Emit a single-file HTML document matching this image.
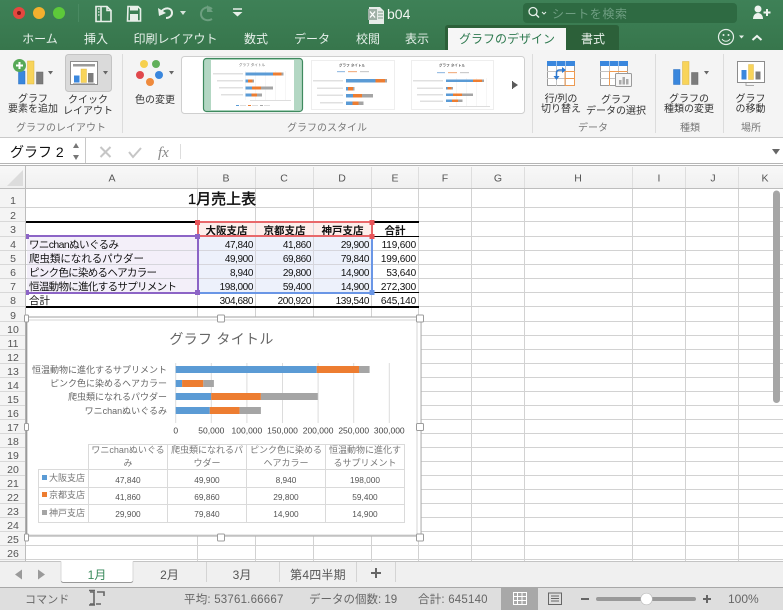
<!DOCTYPE html>
<html lang="ja"><head><meta charset="utf-8"><title>b04</title>
<style>
html,body{margin:0;padding:0;background:#fff;width:783px;height:610px;overflow:hidden}
svg{display:block;position:absolute;left:0;top:0}
text{font-family:"Liberation Sans","Noto Sans CJK JP",sans-serif}
.tab{font-size:12px;fill:#e6f0ea;text-anchor:middle}
.rb{font-size:10px;fill:#333;text-anchor:middle}
.gl{font-size:10px;fill:#777;text-anchor:middle}
.hd{font-size:10.5px;fill:#555;text-anchor:middle}
.c{font-size:10.5px;fill:#111}
.h{font-size:10.5px;fill:#111;text-anchor:middle;font-weight:700}
.n{font-size:10px;fill:#111;text-anchor:end;letter-spacing:-.4px}
.e{letter-spacing:-.15px}
.cl{font-size:9px;fill:#666;text-anchor:end}
.ax{font-size:8.5px;fill:#444;text-anchor:middle}
.th{font-size:9px;fill:#777;text-anchor:middle}
.dv{font-size:8.3px;fill:#555;text-anchor:middle}
.lg{font-size:9px;fill:#777}
.st{font-size:11px;fill:#666}
.sh{font-size:12px;fill:#555;text-anchor:middle}
.ti{font-size:3.6px;fill:#666;text-anchor:middle}
</style></head><body>
<svg width="783" height="610" viewBox="0 0 783 610" xmlns="http://www.w3.org/2000/svg">
<defs>
<linearGradient id="g1" x1="0" y1="0" x2="0" y2="1"><stop offset="0" stop-color="#3e8157"/><stop offset="1" stop-color="#37764c"/></linearGradient>
<linearGradient id="hdr" x1="0" y1="0" x2="0" y2="1"><stop offset="0" stop-color="#f8f8f8"/><stop offset="1" stop-color="#f0f0f0"/></linearGradient>
</defs>

<!-- title bar -->
<rect width="783" height="50" fill="url(#g1)"/>
<circle cx="19" cy="13" r="6" fill="#e5473f"/><circle cx="19" cy="13" r="2" fill="#7a1a18"/>
<circle cx="39" cy="13" r="6" fill="#f3b02e"/>
<circle cx="59" cy="13" r="6" fill="#5dc93a"/>
<path d="M78.500 4v18" stroke="#4a8a62" stroke-width="1"/>
<!-- qat icons -->
<path d="M96 6.500h11l4 4v11h-15zM101 6.500v15M107 6.500v4h4" fill="none" stroke="#e8efe9" stroke-width="1.600"/>
<path d="M98 9h1.500M98 12h1.500M98 15h1.500" stroke="#e8efe9" stroke-width="1.200"/>
<path d="M128 6.500h10l2.500 2.500v12h-13z" fill="none" stroke="#e8efe9" stroke-width="1.600"/>
<rect x="130" y="6" width="8" height="4.500" fill="#e8efe9"/><rect x="130" y="14" width="8" height="7" fill="#e8efe9"/>
<path d="M161 12c3-5 11-5 11 1 0 3-3 5-6 5" fill="none" stroke="#e8efe9" stroke-width="2"/>
<path d="M158 8l1 8 7-3z" fill="#e8efe9"/>
<path d="M180 11h6l-3 4z" fill="#d5e3da"/>
<path d="M212 9c-5-4-11 0-11 5s6 8 11 5" fill="none" stroke="#6d9f80" stroke-width="2"/>
<path d="M207 5v7h6z" fill="#6d9f80"/>
<path d="M233 9h9" stroke="#e8efe9" stroke-width="1.500"/><path d="M232.500 12h10l-5 4.500z" fill="#e8efe9"/>
<!-- document -->
<path d="M369 7h11l4 4v13h-15z" fill="#e6ece8"/>
<rect x="368" y="9" width="9" height="11" fill="#9fb0a6"/>
<path d="M370 11.500l5 6M375 11.500l-5 6" stroke="#fff" stroke-width="1.300"/>
<path d="M378 12h5M378 15h5M378 18h5" stroke="#7e9c8a" stroke-width="1"/>
<text x="387" y="19" font-size="14" fill="#f0f5f1">b04</text>
<!-- search -->
<rect x="523" y="3" width="214" height="20" rx="4" fill="#2e6a42"/>
<circle cx="533" cy="11.500" r="4" fill="none" stroke="#e6efe9" stroke-width="1.300"/><path d="M536 14.500l3 3" stroke="#e6efe9" stroke-width="1.500"/>
<path d="M542 12l2 2 2-2" fill="none" stroke="#e6efe9" stroke-width="1"/>
<text x="552" y="18" font-size="12" fill="#6f9e82" letter-spacing=".6">シートを検索</text>
<circle cx="758" cy="9" r="3.500" fill="#eef3ef"/><path d="M753 19c0-8 10-8 10 0z" fill="#eef3ef"/>
<path d="M767 9v7M763.500 12.500h7" stroke="#eef3ef" stroke-width="2"/>
<!-- tabs -->
<text class="tab" x="40" y="43">ホーム</text>
<text class="tab" x="96" y="43">挿入</text>
<text class="tab" x="175.500" y="43">印刷レイアウト</text>
<text class="tab" x="256" y="43">数式</text>
<text class="tab" x="312" y="43">データ</text>
<text class="tab" x="368" y="43">校閲</text>
<text class="tab" x="417" y="43">表示</text>
<path d="M445 50V28q0-3 3-3h168q3 0 3 3v22z" fill="#2c6039"/>
<rect x="448" y="28" width="118" height="22" fill="#f6f6f6"/>
<text class="tab" x="507" y="43" style="fill:#2f7a50">グラフのデザイン</text>
<text class="tab" x="593" y="43" style="fill:#eaf2ec">書式</text>
<circle cx="726" cy="37" r="7.500" fill="none" stroke="#e6efe9" stroke-width="1.200"/>
<circle cx="723.500" cy="35" r="1" fill="#e6efe9"/><circle cx="728.500" cy="35" r="1" fill="#e6efe9"/>
<path d="M722 39c2 3 6 3 8 0" fill="none" stroke="#e6efe9" stroke-width="1"/>
<path d="M739 35.500h5l-2.500 3z" fill="#e6efe9"/>
<path d="M752.500 40l4.500-4 4.500 4" fill="none" stroke="#eef3ef" stroke-width="2"/>

<!-- ribbon -->
<rect y="50" width="783" height="87" fill="#f4f4f4"/>
<path d="M0 137.500h783" stroke="#c9c9c9"/>
<!-- add element -->
<rect x="18.500" y="71" width="6.500" height="13" fill="#3a87dd" stroke="#2a6fc0" stroke-width=".5"/>
<rect x="27.500" y="61" width="6.500" height="23" fill="#f8d45a" stroke="#d9b23e" stroke-width=".5"/>
<rect x="36.500" y="72" width="6.500" height="12" fill="#7c7c7c" stroke="#666" stroke-width=".5"/>
<circle cx="19.500" cy="65.500" r="6.500" fill="#57a957"/>
<path d="M19.500 62v7M16 65.500h7" stroke="#fff" stroke-width="2"/>
<path d="M48 71h5l-2.500 3.500z" fill="#666"/>
<text class="rb" x="33" y="102">グラフ</text>
<text class="rb" x="33" y="112">要素を追加</text>
<!-- quick layout -->
<rect x="65.500" y="54.500" width="46" height="37" rx="3" fill="#dadada" stroke="#c4c4c4"/>
<rect x="70.500" y="61.500" width="27" height="23" fill="#fff" stroke="#8c8c8c"/>
<rect x="73" y="64" width="22" height="2.500" fill="#9a9a9a"/>
<rect x="74" y="75.500" width="5.500" height="7" fill="#3a87dd"/>
<rect x="81" y="69" width="5.500" height="13.500" fill="#f8d45a" stroke="#d9b23e" stroke-width=".4"/>
<rect x="88" y="73" width="5.500" height="9.500" fill="#7c7c7c"/>
<path d="M73 83.500h22" stroke="#bbb"/>
<path d="M103 71h5l-2.500 3.500z" fill="#666"/>
<text class="rb" x="88" y="103">クイック</text>
<text class="rb" x="88" y="114">レイアウト</text>
<text class="gl" x="61" y="131">グラフのレイアウト</text>
<path d="M122.500 54v79M532.500 54v79M655.500 54v79M723.500 54v79" stroke="#dcdcdc"/>
<!-- colour -->
<circle cx="144" cy="64" r="4" fill="#f6d04d"/><circle cx="156" cy="64" r="4" fill="#62b05a"/>
<circle cx="140" cy="75" r="4" fill="#e0484c"/><circle cx="159" cy="75" r="4" fill="#3a87dd"/>
<circle cx="150" cy="82" r="4" fill="#ef8a3c"/>
<path d="M169 71h5l-2.500 3.500z" fill="#666"/>
<text class="rb" x="155" y="103">色の変更</text>
<!-- gallery -->
<rect x="181.500" y="56.500" width="343" height="57" rx="3" fill="#fff" stroke="#cfcfcf"/>
<rect x="203.500" y="58.500" width="99" height="53" rx="3" fill="#b3d7c3" stroke="#3f8a5f" stroke-width="1.200"/>
<rect x="211" y="60" width="83" height="50" fill="#fff"/>
<text class="ti" x="252" y="66">グラフ タイトル</text>
<rect x="213" y="73" width="30" height="1.500" fill="#e0e0e0"/><rect x="217" y="80" width="26" height="1.500" fill="#e0e0e0"/><rect x="219" y="87" width="24" height="1.500" fill="#e0e0e0"/><rect x="221" y="94" width="22" height="1.500" fill="#e0e0e0"/>
<path d="M245.500 71v29M255.500 71v29M265.500 71v29M275.500 71v29M285.500 71v29" stroke="#f0f0f0" stroke-width=".6"/>
<rect x="245.500" y="72.500" width="27.500" height="3" fill="#5b9bd5"/><rect x="273" y="72.500" width="8.500" height="3" fill="#ed7d31"/><rect x="281.500" y="72.500" width="2" height="3" fill="#a5a5a5"/>
<rect x="245.500" y="79.500" width="2.500" height="3" fill="#5b9bd5"/><rect x="248" y="79.500" width="4.500" height="3" fill="#ed7d31"/><rect x="252.500" y="79.500" width="1.500" height="3" fill="#a5a5a5"/>
<rect x="245.500" y="86.500" width="6.500" height="3" fill="#5b9bd5"/><rect x="252" y="86.500" width="9" height="3" fill="#ed7d31"/><rect x="261" y="86.500" width="12" height="3" fill="#a5a5a5"/>
<rect x="245.500" y="93.500" width="6" height="3" fill="#5b9bd5"/><rect x="251.500" y="93.500" width="5.500" height="3" fill="#ed7d31"/><rect x="257" y="93.500" width="5" height="3" fill="#a5a5a5"/>
<rect x="250" y="100" width="41" height="1" fill="#ddd"/>
<rect x="236" y="105" width="3" height="1" fill="#5b9bd5"/><rect x="248" y="105" width="3" height="1" fill="#ed7d31"/><rect x="260" y="105" width="3" height="1" fill="#a5a5a5"/>
<rect x="240" y="105" width="6" height="1" fill="#ddd"/><rect x="252" y="105" width="6" height="1" fill="#ddd"/><rect x="264" y="105" width="6" height="1" fill="#ddd"/>

<rect x="311.500" y="60.500" width="83" height="49" fill="#fff" stroke="#eee"/>
<text class="ti" x="352" y="66.500" font-weight="700">グラフ タイトル</text>
<rect x="337" y="71" width="8" height="1.200" fill="#9cc0e4"/><rect x="348" y="71" width="9" height="1.200" fill="#f2b48a"/><rect x="360" y="71" width="9" height="1.200" fill="#ccc"/>
<rect x="313" y="80" width="30" height="1.500" fill="#e0e0e0"/><rect x="317" y="87.500" width="26" height="1.500" fill="#e0e0e0"/><rect x="317" y="94.500" width="26" height="1.500" fill="#e0e0e0"/><rect x="320" y="102" width="23" height="1.500" fill="#e0e0e0"/>
<rect x="346" y="79" width="29.500" height="3.500" fill="#5b9bd5"/><rect x="375.500" y="79" width="9.500" height="3.500" fill="#ed7d31"/><rect x="385" y="79" width="2" height="3.500" fill="#a5a5a5"/>
<rect x="346" y="87" width="2" height="3.500" fill="#5b9bd5"/><rect x="348" y="87" width="5" height="3.500" fill="#ed7d31"/><rect x="353" y="87" width="1.500" height="3.500" fill="#a5a5a5"/>
<rect x="346" y="94" width="7" height="3.500" fill="#5b9bd5"/><rect x="353" y="94" width="9" height="3.500" fill="#ed7d31"/><rect x="362" y="94" width="11" height="3.500" fill="#a5a5a5"/>
<rect x="346" y="101.500" width="6.500" height="3.500" fill="#5b9bd5"/><rect x="352.500" y="101.500" width="6" height="3.500" fill="#ed7d31"/><rect x="358.500" y="101.500" width="5" height="3.500" fill="#a5a5a5"/>

<rect x="411.500" y="60.500" width="82" height="49" fill="#fff" stroke="#eee"/>
<text class="ti" x="452" y="66.500" font-weight="700">グラフ タイトル</text>
<rect x="437" y="72" width="8" height="1.200" fill="#9cc0e4"/><rect x="448" y="72" width="9" height="1.200" fill="#f2b48a"/><rect x="460" y="72" width="9" height="1.200" fill="#ccc"/>
<rect x="413" y="80" width="30" height="1.500" fill="#e0e0e0"/><rect x="417" y="87.500" width="26" height="1.500" fill="#e0e0e0"/><rect x="417" y="94" width="26" height="1.500" fill="#e0e0e0"/><rect x="420" y="100.500" width="23" height="1.500" fill="#e0e0e0"/>
<path d="M456.500 78v28M466.500 78v28M476.500 78v28M486.500 78v28" stroke="#f0f0f0" stroke-width=".6"/>
<rect x="446" y="79.500" width="27" height="2.500" fill="#5b9bd5"/><rect x="473" y="79.500" width="9" height="2.500" fill="#ed7d31"/><rect x="482" y="79.500" width="2" height="2.500" fill="#a5a5a5"/>
<rect x="446" y="87" width="1.500" height="2.500" fill="#5b9bd5"/><rect x="447.500" y="87" width="4" height="2.500" fill="#ed7d31"/><rect x="451.500" y="87" width="1.500" height="2.500" fill="#a5a5a5"/>
<rect x="446" y="93.500" width="7" height="2.500" fill="#5b9bd5"/><rect x="453" y="93.500" width="9" height="2.500" fill="#ed7d31"/><rect x="462" y="93.500" width="11" height="2.500" fill="#a5a5a5"/>
<rect x="446" y="99.500" width="6" height="2.500" fill="#5b9bd5"/><rect x="452" y="99.500" width="6" height="2.500" fill="#ed7d31"/><rect x="458" y="99.500" width="4.500" height="2.500" fill="#a5a5a5"/>
<rect x="449" y="106" width="41" height="1" fill="#ddd"/>
<path d="M512 81l6 4-6 4z" fill="#5a5a5a"/>
<rect x="512" y="81" width="1" height="8" fill="#5a5a5a"/>
<text class="gl" x="327" y="131">グラフのスタイル</text>

<!-- data icons -->
<rect x="547.500" y="61.500" width="27" height="24" fill="#fff" stroke="#9a9a9a"/>
<path d="M547 71.500h28M547 78.500h28M556.500 66v20M565.500 66v20" stroke="#c4c4c4"/>
<rect x="547" y="61" width="28" height="5" fill="#3a87dd"/>
<path d="M565.500 61v5M556.500 61v5" stroke="#9cc3ee"/>
<path d="M565 71.500h9.500M565 78.500h9.500M565 71v14.500M574.500 71v14.500M565 85.500h9.500" fill="none" stroke="#ef9a50"/>
<path d="M556.500 77v-4q0-3 3-3h3" fill="none" stroke="#2d78cf" stroke-width="1.500"/>
<path d="M562 67v6l4-3zM553.500 76h6l-3 4z" fill="#2d78cf"/>
<text class="rb" x="561" y="102">行/列の</text>
<text class="rb" x="561" y="112">切り替え</text>
<rect x="600.500" y="61.500" width="27" height="24" fill="#fff" stroke="#9a9a9a"/>
<path d="M600 71.500h28M600 78.500h28M609.500 66v20M618.500 66v20" stroke="#c4c4c4"/>
<rect x="600" y="61" width="28" height="5" fill="#3a87dd"/>
<path d="M609.500 61v5M618.500 61v5" stroke="#9cc3ee"/>
<path d="M609.500 71.500h18M609.500 71.500v14" fill="none" stroke="#ef9a50"/>
<rect x="615.500" y="73.500" width="16" height="13" rx="1" fill="#f6f6f6" stroke="#9a9a9a"/>
<rect x="619" y="80" width="2.500" height="4.500" fill="#aaa"/><rect x="622.500" y="77" width="2.500" height="7.500" fill="#aaa"/><rect x="626" y="79" width="2.500" height="5.500" fill="#aaa"/>
<text class="rb" x="616" y="103">グラフ</text>
<text class="rb" x="616" y="114">データの選択</text>
<text class="gl" x="593" y="131">データ</text>
<!-- change type -->
<rect x="673.500" y="69.500" width="6.500" height="15" fill="#3a87dd" stroke="#2a6fc0" stroke-width=".5"/>
<rect x="682.500" y="61.500" width="6.500" height="23" fill="#f8d45a" stroke="#d9b23e" stroke-width=".5"/>
<rect x="691.500" y="72.500" width="6.500" height="12" fill="#7c7c7c" stroke="#666" stroke-width=".5"/>
<path d="M704 71h5l-2.500 3.500z" fill="#666"/>
<text class="rb" x="689" y="102">グラフの</text>
<text class="rb" x="689" y="112">種類の変更</text>
<text class="gl" x="690" y="131">種類</text>
<!-- move -->
<rect x="737.500" y="61.500" width="27" height="21" fill="#fff" stroke="#8c8c8c"/>
<rect x="741.500" y="70" width="5" height="9.500" fill="#3a87dd"/>
<rect x="748.500" y="64.500" width="5" height="15" fill="#f8d45a" stroke="#d9b23e" stroke-width=".4"/>
<rect x="755.500" y="71.500" width="5" height="8" fill="#7c7c7c"/>
<path d="M746 83v2.500h8" fill="none" stroke="#aaa"/>
<text class="rb" x="750.500" y="102">グラフ</text>
<text class="rb" x="750.500" y="112">の移動</text>
<text class="gl" x="751" y="131">場所</text>

<!-- formula bar -->
<rect y="138" width="783" height="26" fill="#fff"/>
<text x="10" y="157" font-size="14" fill="#111">グラフ 2</text>
<path d="M73 148l3-5 3 5z" fill="#777"/><path d="M73 155l3 5 3-5z" fill="#777"/>
<path d="M85.500 138v25" stroke="#c8c8c8"/>
<path d="M100.500 147l10 10M110.500 147l-10 10" stroke="#c6c6c6" stroke-width="2"/>
<path d="M129 152l4 5 8-9" fill="none" stroke="#c6c6c6" stroke-width="2"/>
<text x="158" y="157" font-size="15" font-style="italic" fill="#888" style="font-family:'Liberation Serif',serif">fx</text>
<path d="M180.500 144v15" stroke="#ddd"/>
<path d="M772 149h8l-4 5.500z" fill="#666"/>
<path d="M0 163.500h783" stroke="#b5b5b5"/><path d="M0 165.500h783" stroke="#b5b5b5"/>

<!-- grid -->
<rect y="166" width="783" height="395" fill="#fff"/>
<rect y="166" width="783" height="22" fill="url(#hdr)"/>
<rect y="188" width="25.500" height="373" fill="#f4f4f4"/>
<path d="M23 170v16H7z" fill="#dcdcdc"/>
<path d="M26 207.500h757M26 221.500h757M26 236.500h757M26 250.500h757M26 264.500h757M26 278.500h757M26 292.500h757M26 306.500h757M26 321.500h757M26 335.500h757M26 349.500h757M26 363.500h757M26 377.500h757M26 391.500h757M26 405.500h757M26 419.500h757M26 433.500h757M26 447.500h757M26 461.500h757M26 475.500h757M26 489.500h757M26 503.500h757M26 517.500h757M26 531.500h757M26 545.500h757M26 559.500h757" stroke="#d2d2d2"/>
<path d="M197.500 207v354M255.500 207v354M313.500 207v354M371.500 207v354M418.500 188v373M471.500 188v373M524.500 188v373M632.500 188v373M685.500 188v373M738.500 188v373M197.500 188v20M255.500 188v20M313.500 188v20M371.500 188v20" stroke="#d2d2d2"/>
<path d="M197.500 167v21M255.500 167v21M313.500 167v21M371.500 167v21M418.500 167v21M471.500 167v21M524.500 167v21M632.500 167v21M685.500 167v21M738.500 167v21" stroke="#dedede"/>
<path d="M0 188.500h783" stroke="#bdbdbd"/><path d="M25.500 166v395" stroke="#bdbdbd"/>
<path d="M0 207.500h25M0 221.500h25M0 236.500h25M0 250.500h25M0 264.500h25M0 278.500h25M0 292.500h25M0 306.500h25M0 321.500h25M0 335.500h25M0 349.500h25M0 363.500h25M0 377.500h25M0 391.500h25M0 405.500h25M0 419.500h25M0 433.500h25M0 447.500h25M0 461.500h25M0 475.500h25M0 489.500h25M0 503.500h25M0 517.500h25M0 531.500h25M0 545.500h25M0 559.500h25" stroke="#d8d8d8"/>
<!-- col heads -->
<text class="hd" x="112" y="181.500">A</text><text class="hd" x="226" y="181.500">B</text><text class="hd" x="284" y="181.500">C</text><text class="hd" x="342" y="181.500">D</text><text class="hd" x="395" y="181.500">E</text><text class="hd" x="445" y="181.500">F</text><text class="hd" x="498" y="181.500">G</text><text class="hd" x="578" y="181.500">H</text><text class="hd" x="659" y="181.500">I</text><text class="hd" x="713" y="181.500">J</text><text class="hd" x="765" y="181.500">K</text>
<!-- row heads -->
<text class="hd" x="13" y="204">1</text><text class="hd" x="13" y="219">2</text><text class="hd" x="13" y="233">3</text><text class="hd" x="13" y="248">4</text><text class="hd" x="13" y="262">5</text><text class="hd" x="13" y="276">6</text><text class="hd" x="13" y="290">7</text><text class="hd" x="13" y="304">8</text><text class="hd" x="13" y="319">9</text><text class="hd" x="13" y="333">10</text><text class="hd" x="13" y="347">11</text><text class="hd" x="13" y="361">12</text><text class="hd" x="13" y="375">13</text><text class="hd" x="13" y="389">14</text><text class="hd" x="13" y="403">15</text><text class="hd" x="13" y="417">16</text><text class="hd" x="13" y="431">17</text><text class="hd" x="13" y="445">18</text><text class="hd" x="13" y="459">19</text><text class="hd" x="13" y="473">20</text><text class="hd" x="13" y="487">21</text><text class="hd" x="13" y="501">22</text><text class="hd" x="13" y="515">23</text><text class="hd" x="13" y="529">24</text><text class="hd" x="13" y="543">25</text><text class="hd" x="13" y="557">26</text>

<!-- highlights -->
<rect x="27" y="237" width="170" height="55" fill="#f3eff9"/>
<rect x="198" y="223" width="173" height="13" fill="#fdeeeb"/>
<rect x="199" y="237" width="172" height="55" fill="#edf1fb"/>
<path d="M27 250.500h170M27 264.500h170M27 278.500h170M199 250.500h172M199 264.500h172M199 278.500h172M255.500 237v55M313.500 237v55M255.500 223v13M313.500 223v13" stroke="#d6d6dc"/>
<!-- table borders -->
<path d="M26 222h172M372 222h47" stroke="#000" stroke-width="2"/>
<path d="M26 307h393" stroke="#000" stroke-width="2"/>
<path d="M372 236.500h47M372 292.500h47" stroke="#000" stroke-width="1"/>
<!-- title + table -->
<text x="222" y="204" font-size="15" fill="#111" stroke="#111" stroke-width=".2" text-anchor="middle" font-weight="500">1月売上表</text>
<text class="h" x="226.500" y="234">大阪支店</text><text class="h" x="284.500" y="234">京都支店</text><text class="h" x="342.500" y="234">神戸支店</text><text class="h" x="395" y="234">合計</text>
<text class="c" x="29" y="248" textLength="90">ワニchanぬいぐるみ</text>
<text class="c" x="29" y="262" textLength="115">爬虫類になれるパウダー</text>
<text class="c" x="29" y="276" textLength="128">ピンク色に染めるヘアカラー</text>
<text class="c" x="29" y="290" textLength="148">恒温動物に進化するサプリメント</text>
<text class="c" x="29" y="304">合計</text>
<text class="n" x="253" y="248">47,840</text><text class="n" x="311" y="248">41,860</text><text class="n" x="369" y="248">29,900</text><text class="n e" x="416" y="248">119,600</text>
<text class="n" x="253" y="262">49,900</text><text class="n" x="311" y="262">69,860</text><text class="n" x="369" y="262">79,840</text><text class="n e" x="416" y="262">199,600</text>
<text class="n" x="253" y="276">8,940</text><text class="n" x="311" y="276">29,800</text><text class="n" x="369" y="276">14,900</text><text class="n e" x="416" y="276">53,640</text>
<text class="n" x="253" y="290">198,000</text><text class="n" x="311" y="290">59,400</text><text class="n" x="369" y="290">14,900</text><text class="n e" x="416" y="290">272,300</text>
<text class="n" x="253" y="304">304,680</text><text class="n" x="311" y="304">200,920</text><text class="n" x="369" y="304">139,540</text><text class="n e" x="416" y="304">645,140</text>
<!-- range selection -->
<rect x="198" y="222" width="174" height="14" fill="none" stroke="#e8686a" stroke-width="2"/>
<path d="M372 238v55H199" fill="none" stroke="#6a96e6" stroke-width="2"/>
<path d="M27 236h171v57H27" fill="none" stroke="#8c64c6" stroke-width="2"/>
<rect x="195" y="220" width="5" height="5" fill="#e8555a"/><rect x="369.500" y="220" width="5" height="5" fill="#e8555a"/><rect x="369.500" y="234" width="5" height="5" fill="#e8555a"/>
<rect x="195" y="234" width="5" height="5" fill="#8c64c6"/><rect x="195" y="290" width="5" height="5" fill="#8c64c6"/><rect x="26" y="234" width="3" height="5" fill="#8c64c6"/><rect x="26" y="290" width="3" height="5" fill="#8c64c6"/>
<rect x="369.500" y="290" width="5" height="5" fill="#6a96e6"/>

<!-- chart frame -->
<rect x="26" y="317" width="395" height="219" fill="#fff" stroke="#b0b0b0" stroke-width="1.200"/>
<rect x="27" y="320" width="390" height="215" fill="#fff" stroke="#d4d4d4"/>
<rect x="418" y="318" width="3" height="217" fill="#fff"/>
<path d="M26.500 317v219" stroke="#9a9a9a" stroke-width="1.500"/>
<path d="M421 317v219" stroke="#b0b0b0"/>
<g fill="#fff" stroke="#9c9c9c">
<rect x="217.500" y="315" width="7" height="7" rx="1"/><rect x="416.500" y="315" width="7" height="7" rx="1"/><rect x="24.500" y="315" width="4" height="7" rx="1"/>
<rect x="416.500" y="423.500" width="7" height="7" rx="1"/><rect x="24.500" y="423.500" width="4" height="7" rx="1"/>
<rect x="217.500" y="534" width="7" height="7" rx="1"/><rect x="416.500" y="534" width="7" height="7" rx="1"/><rect x="24.500" y="534" width="4" height="7" rx="1"/>
</g>
<text x="221.500" y="344" font-size="14" fill="#666" text-anchor="middle" letter-spacing=".3">グラフ タイトル</text>
<path d="M175.700 363v60M211.300 363v60M246.900 363v60M282.500 363v60M318.100 363v60M353.700 363v60M389.300 363v60" stroke="#dcdcdc"/>
<rect x="175.700" y="366" width="141" height="7" fill="#5b9bd5"/><rect x="316.700" y="366" width="42.300" height="7" fill="#ed7d31"/><rect x="359" y="366" width="10.600" height="7" fill="#a5a5a5"/>
<rect x="175.700" y="380" width="6.400" height="7" fill="#5b9bd5"/><rect x="182.100" y="380" width="21.200" height="7" fill="#ed7d31"/><rect x="203.300" y="380" width="10.600" height="7" fill="#a5a5a5"/>
<rect x="175.700" y="393" width="35.500" height="7" fill="#5b9bd5"/><rect x="211.200" y="393" width="49.700" height="7" fill="#ed7d31"/><rect x="260.900" y="393" width="56.900" height="7" fill="#a5a5a5"/>
<rect x="175.700" y="407" width="34.100" height="7" fill="#5b9bd5"/><rect x="209.800" y="407" width="29.800" height="7" fill="#ed7d31"/><rect x="239.600" y="407" width="21.300" height="7" fill="#a5a5a5"/>
<text class="cl" x="167" y="373">恒温動物に進化するサプリメント</text>
<text class="cl" x="167" y="386.500">ピンク色に染めるヘアカラー</text>
<text class="cl" x="167" y="400">爬虫類になれるパウダー</text>
<text class="cl" x="167" y="414">ワニchanぬいぐるみ</text>
<text class="ax" x="175.700" y="433.500">0</text><text class="ax" x="211.300" y="433.500">50,000</text><text class="ax" x="246.900" y="433.500">100,000</text><text class="ax" x="282.500" y="433.500">150,000</text><text class="ax" x="318.100" y="433.500">200,000</text><text class="ax" x="353.700" y="433.500">250,000</text><text class="ax" x="389.300" y="433.500">300,000</text>
<!-- data table -->
<path d="M88.500 444.500h316M38.500 469.500h366M38.500 487.500h366M38.500 504.500h366M38.500 522.500h366M38.500 469v54M88.500 444v79M167.500 444v79M246.500 444v79M325.500 444v79M404.500 444v79" stroke="#dadada" fill="none"/>
<text class="th" x="128" y="453">ワニchanぬいぐる</text><text class="th" x="128" y="466">み</text>
<text class="th" x="207" y="453">爬虫類になれるパ</text><text class="th" x="207" y="466">ウダー</text>
<text class="th" x="286" y="453">ピンク色に染める</text><text class="th" x="286" y="466">ヘアカラー</text>
<text class="th" x="365" y="453">恒温動物に進化す</text><text class="th" x="365" y="466">るサプリメント</text>
<rect x="42" y="475" width="5" height="5" fill="#5b9bd5"/><text class="lg" x="49" y="481">大阪支店</text>
<rect x="42" y="492" width="5" height="5" fill="#ed7d31"/><text class="lg" x="49" y="498">京都支店</text>
<rect x="42" y="510" width="5" height="5" fill="#a5a5a5"/><text class="lg" x="49" y="516">神戸支店</text>
<text class="dv" x="128" y="483">47,840</text><text class="dv" x="207" y="483">49,900</text><text class="dv" x="286" y="483">8,940</text><text class="dv" x="365" y="483">198,000</text>
<text class="dv" x="128" y="500">41,860</text><text class="dv" x="207" y="500">69,860</text><text class="dv" x="286" y="500">29,800</text><text class="dv" x="365" y="500">59,400</text>
<text class="dv" x="128" y="517">29,900</text><text class="dv" x="207" y="517">79,840</text><text class="dv" x="286" y="517">14,900</text><text class="dv" x="365" y="517">14,900</text>

<!-- scrollbar -->
<rect x="773" y="190.500" width="7" height="212.500" rx="3.500" fill="#a6a6a6"/>

<!-- sheet tabs -->
<rect y="561" width="783" height="26" fill="#f0f0f0"/>
<path d="M0 561.500h783" stroke="#c4c4c4"/>
<path d="M22 569.500v10l-7-5z" fill="#9a9a9a"/><path d="M38 569.500v10l7-5z" fill="#9a9a9a"/>
<path d="M61 561h72v20q0 2-2 2H63q-2 0-2-2z" fill="#fff"/>
<path d="M61.500 581q0 1.500 2 1.500h67q2 0 2-1.500" fill="none" stroke="#999"/>
<path d="M61 561.500v20M133 561.500v20" stroke="#d8d8d8"/>
<text class="sh" x="97" y="579" style="fill:#3a8a5c">1月</text>
<text class="sh" x="169.500" y="579">2月</text>
<text class="sh" x="242" y="579">3月</text>
<text class="sh" x="318" y="579" letter-spacing=".2">第4四半期</text>
<path d="M206.500 562v20M279.500 562v20M356.500 562v20M395.500 562v20" stroke="#d4d4d4"/>
<path d="M376 568v10M371 573h10" stroke="#666" stroke-width="2"/>

<!-- status -->
<rect y="587" width="783" height="23" fill="#dedede"/>
<path d="M0 587.500h783" stroke="#a8a8a8"/>
<text class="st" x="25" y="603" letter-spacing=".1">コマンド</text>
<path d="M90 592h4v12h-4M96 604h5M97 592h7v4" fill="none" stroke="#666" stroke-width="1.600"/>
<path d="M89 590.500h6M89 605h6" stroke="#666" stroke-width="1.400"/>
<text class="st" x="184" y="603" style="font-size:11.500px" letter-spacing=".2">平均: 53761.66667</text>
<text class="st" x="309" y="603" style="font-size:11.500px">データの個数: 19</text>
<text class="st" x="418" y="603" style="font-size:11.500px" letter-spacing=".2">合計: 645140</text>
<rect x="501" y="588" width="37" height="22" fill="#a8a8a8"/>
<path d="M513.500 592.500h13v12h-13zM513.500 596.500h13M513.500 600.500h13M517.500 592.500v12M522 592.500v12" fill="none" stroke="#fff"/>
<rect x="548.500" y="593" width="13" height="11.500" fill="none" stroke="#666"/>
<path d="M551 596h8M551 598.500h8M551 601h8" stroke="#666"/>
<path d="M581 599h8" stroke="#666" stroke-width="2"/>
<rect x="596" y="597" width="100" height="4" rx="2" fill="#999"/>
<circle cx="646.500" cy="599" r="5.800" fill="#fff" stroke="#bbb" stroke-width=".6"/>
<path d="M703 599h8M707 595v8" stroke="#666" stroke-width="2"/>
<text x="728" y="603" font-size="12" fill="#666">100%</text>
</svg>
</body></html>
